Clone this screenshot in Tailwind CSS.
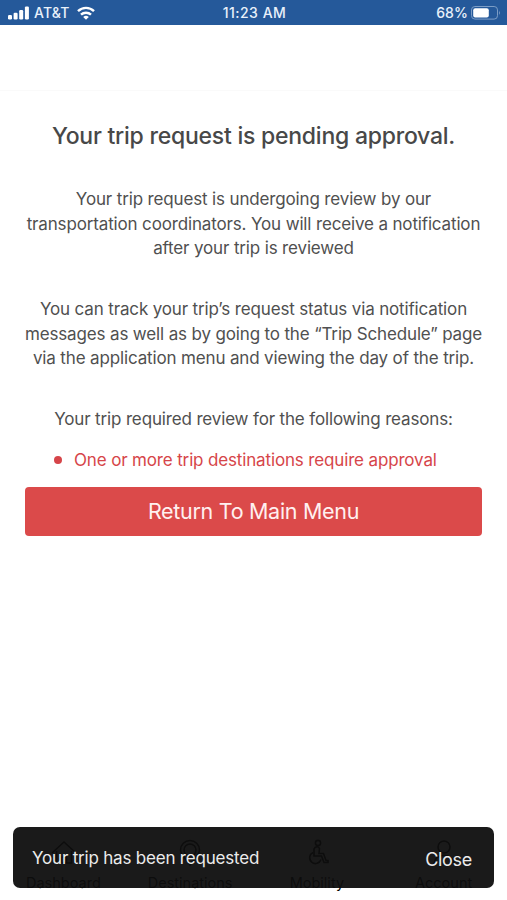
<!DOCTYPE html>
<html lang="en">
<head>
    <meta charset="UTF-8">
    <meta name="viewport" content="width=device-width, initial-scale=1.0">
    <title>Trip Request</title>
    <script src="https://cdn.jsdelivr.net/npm/@tailwindcss/browser@4"></script>
</head>
<body class="bg-white font-['Inter','Liberation_Sans',sans-serif] text-[#505050]">
    <div class="relative flex h-[900px] flex-col overflow-hidden">
        <!-- Status bar -->
        <header class="grid h-[25px] shrink-0 grid-cols-3 items-center bg-[#25599a] pl-2 pr-1.5 pt-px text-[14px] font-medium leading-none tracking-[0.2px] text-[#e9f1fa]">
            <div class="flex items-center gap-[5px]">
                <svg class="mb-px h-3.5 w-[21px]" viewBox="0 0 21 14" fill="#fff">
                    <rect x="0" y="9" width="4" height="4.5" rx="1.2"/>
                    <rect x="5.6" y="6.8" width="4" height="6.7" rx="1.2"/>
                    <rect x="11.2" y="4" width="4" height="9.5" rx="1.2"/>
                    <rect x="16.9" y="0.4" width="4" height="13.1" rx="1.2"/>
                </svg>
                <span>AT&amp;T</span>
                <svg class="ml-0.5 mb-px h-3.5 w-[18px]" viewBox="0 0 18 14" fill="none" stroke="#fff" stroke-width="2.4">
                    <path d="M1 5.2a11.4 11.4 0 0 1 16 0"/>
                    <path d="M4 8.7a7.2 7.2 0 0 1 10 0"/>
                    <path d="M9 13.8 6.2 11.1a4 4 0 0 1 5.6 0z" fill="#fff" stroke="none"/>
                </svg>
            </div>
            <div class="text-center tracking-[0.5px]">11:23 AM</div>
            <div class="flex items-center justify-end gap-[3px]">
                <span class="tracking-[0.1px]">68%</span>
                <svg class="h-3.5 w-[30px]" viewBox="0 0 30 14" fill="none">
                    <rect x="0.5" y="0.5" width="26" height="12.6" rx="3.4" stroke="#7c9dc6"/>
                    <rect x="2.2" y="2.2" width="15.6" height="9.2" rx="2" fill="#fff"/>
                    <path d="M28 4.6q1.8 2.2 0 4.4z" fill="#7c9dc6"/>
                </svg>
            </div>
        </header>

        <div class="h-[66px] shrink-0 border-b border-[#fafafa]"></div>

        <main class="flex flex-col items-center px-[25px] pt-[29px] text-center text-[17px] leading-[24.4px] tracking-[-0.15px]">
            <h1 class="whitespace-nowrap text-[23px] font-medium leading-8 tracking-[-0.24px] text-[#484848]">Your trip request is pending approval.</h1>
            <p class="mt-[35.4px] whitespace-nowrap">Your trip request is undergoing review by our<br>transportation coordinators. You will receive a notification<br>after your trip is reviewed</p>
            <p class="mt-[36.6px] whitespace-nowrap">You can track your trip’s request status via notification<br>messages as well as by going to the “Trip Schedule” page<br>via the application menu and viewing the day of the trip.</p>
            <p class="mt-[37px]">Your trip required review for the following reasons:</p>
            <ul class="mt-4 flex self-start pl-[29px] text-[#d64549]">
                <li class="flex items-center gap-3 whitespace-nowrap">
                    <span class="size-2 rounded-full bg-[#d64549]"></span>
                    One or more trip destinations require approval
                </li>
            </ul>
            <button class="mt-[15px] h-[49px] w-full rounded-[4px] bg-[#db4a4a] pb-0.5 text-[21.5px] tracking-[-0.3px] text-[#fff0f0]">Return To Main Menu</button>
        </main>

        <!-- Tab bar -->
        <nav class="mt-auto grid h-[61px] shrink-0 grid-cols-4 text-center text-[14.5px] leading-4 text-black">
            <div class="flex flex-col items-center gap-2">
                <svg class="size-7" viewBox="0 0 28 28" fill="none" stroke="#000" stroke-width="1.6">
                    <path d="M3 14 15 3l12 11M7.500 12v12h15V12"/>
                    <path d="M12.500 24v-6h5v6"/>
                </svg>
                <span>Dashboard</span>
            </div>
            <div class="flex flex-col items-center gap-2">
                <svg class="size-7" viewBox="0 0 28 28" fill="none" stroke="#000" stroke-width="1.6">
                    <path d="M14 26C10 20 4.500 16 4.500 11a9.500 9.500 0 0 1 19 0c0 5-5.500 9-9.500 15z"/>
                    <circle cx="14" cy="11" r="6"/>
                </svg>
                <span>Destinations</span>
            </div>
            <div class="flex flex-col items-center gap-2">
                <svg class="size-7" viewBox="0 0 28 28" fill="none" stroke="#000" stroke-width="1.6">
                    <circle cx="15" cy="4" r="2.600"/>
                    <path d="M12 8.500q3-2 4.500 1l-.5 5h4.500l2.500 7h2v2h-4l-2.500-6.500H11V10z"/>
                    <path d="M10 13.500a5.800 5.800 0 1 0 8 7"/>
                </svg>
                <span>Mobility</span>
            </div>
            <div class="flex flex-col items-center gap-2">
                <svg class="size-7" viewBox="0 0 28 28" fill="none" stroke="#000" stroke-width="1.6">
                    <circle cx="14" cy="8" r="6"/>
                    <path d="M4 26c0-13 20-13 20 0"/>
                </svg>
                <span>Account</span>
            </div>
        </nav>

        <!-- Toast -->
        <div class="absolute inset-x-[13px] bottom-3 flex h-[61px] items-center justify-between rounded-[7px] bg-[#0e0e0e]/95 pl-[19px] pr-[22px] pt-0.5 text-[#ececec]">
            <span class="text-[17px] tracking-[-0.2px]">Your trip has been requested</span>
            <button class="pt-0.5 text-[18px] tracking-[-0.3px]">Close</button>
        </div>
    </div>
</body>
</html>
